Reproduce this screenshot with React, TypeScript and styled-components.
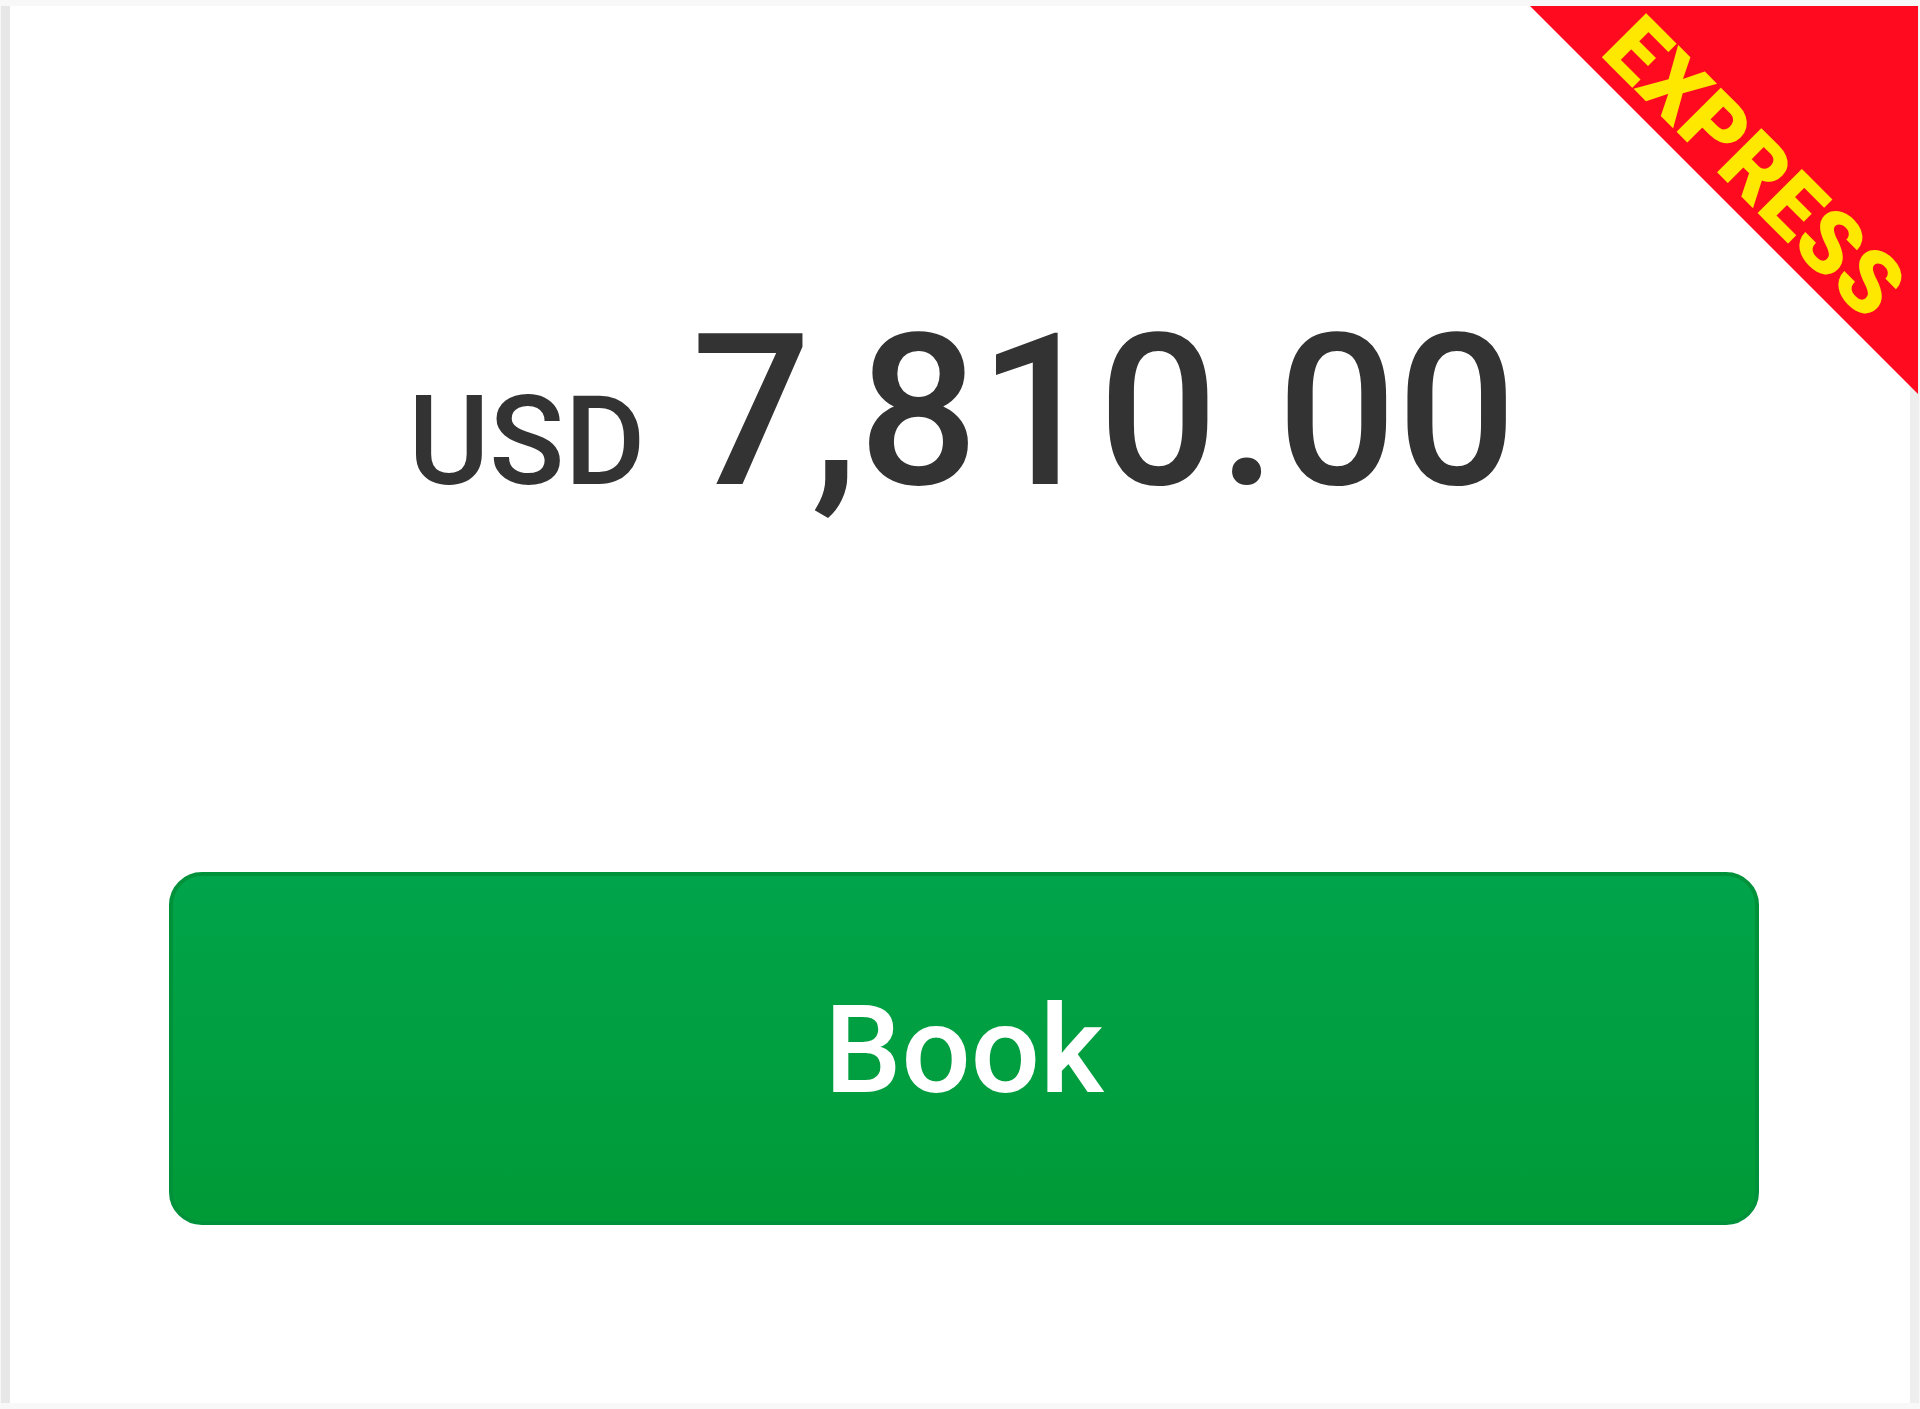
import React from "react";
import styled, { createGlobalStyle } from "styled-components";

const GlobalStyle = createGlobalStyle`
  html, body {
    margin: 0;
    padding: 0;
    background: #f8f8f8;
    font-family: Roboto, "Liberation Sans", Arial, sans-serif;
  }
  * { box-sizing: border-box; }
`;

const Page = styled.div`
  position: relative;
  display: flex;
  width: 1920px;
  height: 1409px;
  padding: 6px 1px 6px 1px;
  overflow: hidden;
`;

const Rail = styled.div<{ $tone: string }>`
  width: 9px;
  flex: none;
  background: ${(p) => p.$tone};
`;

const Card = styled.main`
  flex: 1;
  display: flex;
  flex-direction: column;
  align-items: stretch;
  background: #ffffff;
  padding: 301px 151px 0 159px;
`;

const PriceRow = styled.div`
  display: flex;
  align-items: baseline;
  justify-content: center;
  color: #333333;
  line-height: 1;
  margin-left: -3px;
`;

const Currency = styled.span`
  font-size: 124px;
  font-weight: 500;
  margin-right: 46px;
`;

const Amount = styled.span`
  font-size: 211px;
  font-weight: 500;
`;

const BookButton = styled.button`
  margin-top: 354px;
  height: 353px;
  width: 100%;
  border: 4px solid #00923b;
  border-radius: 33px;
  background: linear-gradient(to bottom, #00a44a, #009a37);
  color: #ffffff;
  font-family: Roboto, "Liberation Sans", Arial, sans-serif;
  font-size: 122px;
  font-weight: 500;
  line-height: 1;
  display: flex;
  align-items: center;
  justify-content: center;
  padding: 5px 0 0 0;
  cursor: pointer;
`;

const Ribbon = styled.div`
  position: absolute;
  top: 6px;
  right: 2px;
  width: 388px;
  height: 388px;
  background: #ff0a1f;
  clip-path: polygon(0 0, 100% 0, 100% 100%);
`;

const RibbonLabel = styled.span`
  position: absolute;
  left: 224px;
  top: 161px;
  transform: translate(-50%, -50%) rotate(45deg);
  color: #ffe800;
  font-family: Roboto, "Liberation Sans", Arial, sans-serif;
  font-weight: 900;
  font-size: 88px;
  line-height: 1;
  white-space: nowrap;
`;

export default function App() {
  return (
    <>
      <GlobalStyle />
      <Page>
        <Rail $tone="#e7e7e7" />
        <Card>
          <PriceRow>
            <Currency>USD</Currency>
            <Amount>7,810.00</Amount>
          </PriceRow>
          <BookButton>Book</BookButton>
        </Card>
        <Rail $tone="#eeeeee" />
        <Ribbon>
          <RibbonLabel>EXPRESS</RibbonLabel>
        </Ribbon>
      </Page>
    </>
  );
}
